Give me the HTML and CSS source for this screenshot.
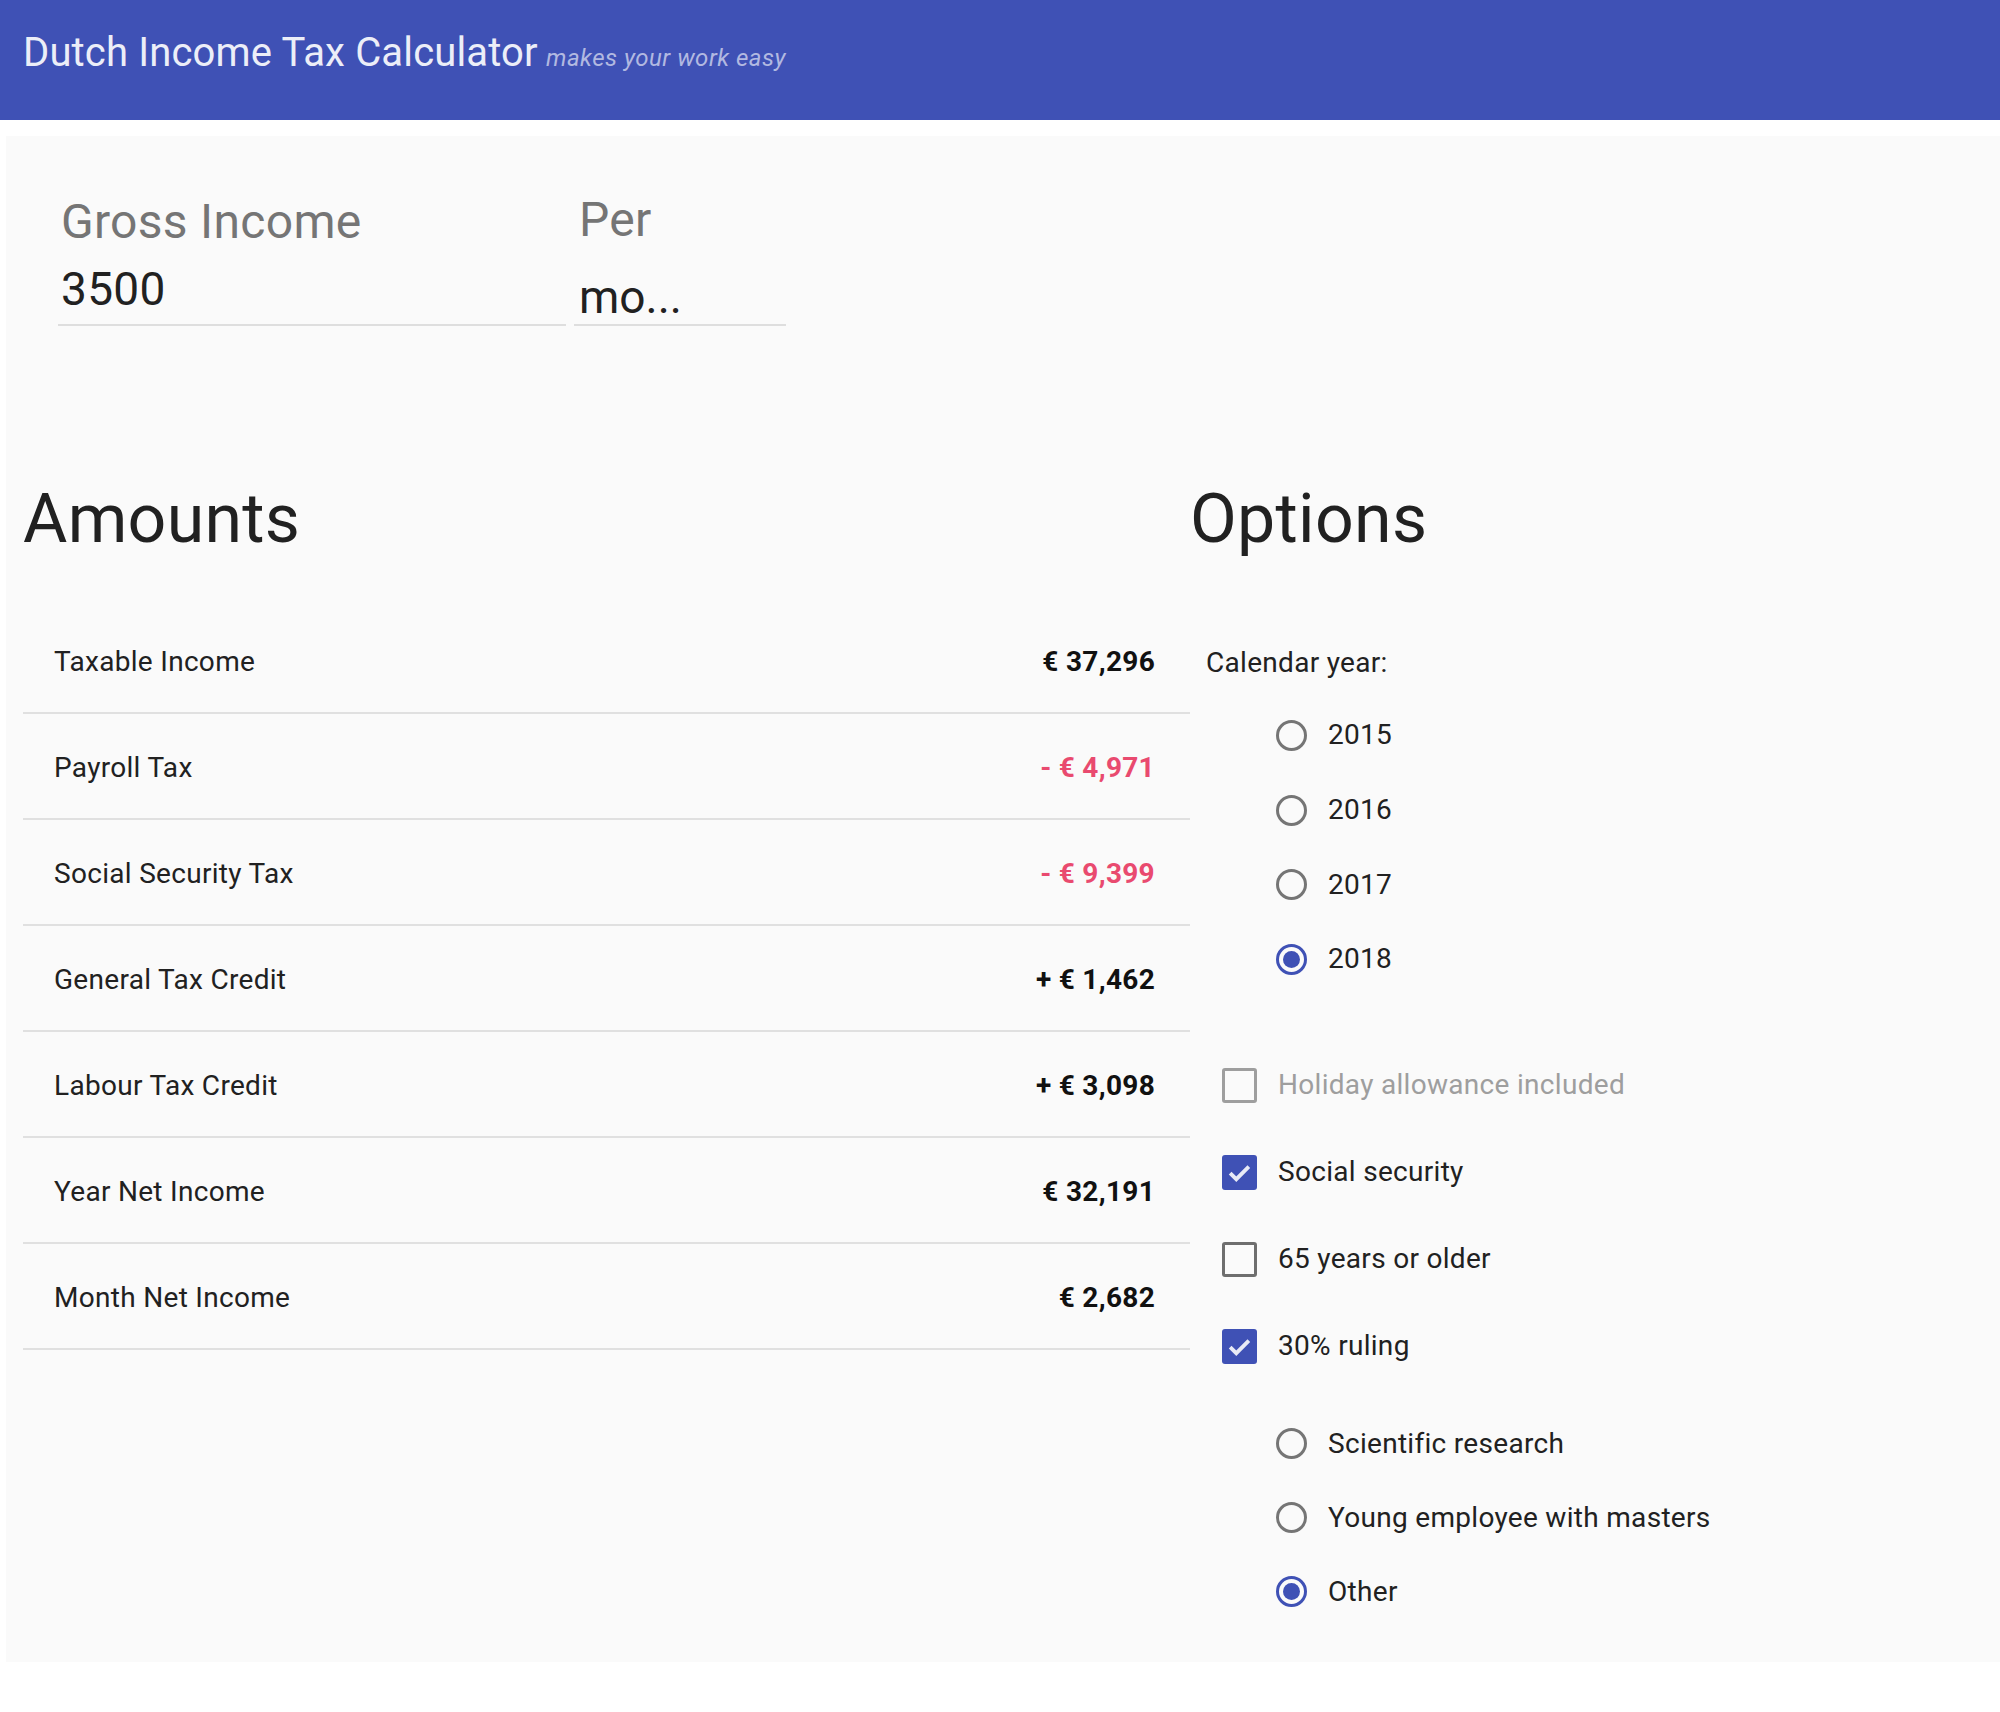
FILE: index.html
```html
<!DOCTYPE html>
<html lang="en">
<head>
<meta charset="utf-8">
<title>Dutch Income Tax Calculator</title>
<link rel="stylesheet" href="styles.css">
</head>
<body>
<header class="topbar">
  <span class="title">Dutch Income Tax Calculator</span>
  <span class="subtitle">makes your work easy</span>
</header>
<main class="panel">
  <section class="fields">
    <div class="field field-gross">
      <div class="field-label">Gross Income</div>
      <div class="field-value">3500</div>
    </div>
    <div class="field field-per">
      <div class="field-label">Per</div>
      <div class="field-value select-value">mo...</div>
    </div>
  </section>
  <section class="columns">
    <div class="amounts">
      <h2 class="heading">Amounts</h2>
      <div class="row"><span>Taxable Income</span><strong class="val">€ 37,296</strong></div>
      <div class="row"><span>Payroll Tax</span><strong class="val neg">- € 4,971</strong></div>
      <div class="row"><span>Social Security Tax</span><strong class="val neg">- € 9,399</strong></div>
      <div class="row"><span>General Tax Credit</span><strong class="val">+ € 1,462</strong></div>
      <div class="row"><span>Labour Tax Credit</span><strong class="val">+ € 3,098</strong></div>
      <div class="row"><span>Year Net Income</span><strong class="val">€ 32,191</strong></div>
      <div class="row"><span>Month Net Income</span><strong class="val">€ 2,682</strong></div>
    </div>
    <div class="options">
      <h2 class="heading heading-options">Options</h2>
      <div class="group-label">Calendar year:</div>
      <div class="radios years">
        <div class="radio-row"><span class="radio"></span><span class="opt-text">2015</span></div>
        <div class="radio-row"><span class="radio"></span><span class="opt-text">2016</span></div>
        <div class="radio-row"><span class="radio"></span><span class="opt-text">2017</span></div>
        <div class="radio-row"><span class="radio checked"></span><span class="opt-text">2018</span></div>
      </div>
      <div class="checks">
        <div class="check-row disabled"><span class="checkbox"></span><span class="opt-text">Holiday allowance included</span></div>
        <div class="check-row"><span class="checkbox checked"><svg viewBox="0 0 24 24" width="35" height="35"><path d="M5.6 12.4 L9.8 16.6 L18.4 8" fill="none" stroke="#e8eaf6" stroke-width="2.6"/></svg></span><span class="opt-text">Social security</span></div>
        <div class="check-row"><span class="checkbox"></span><span class="opt-text">65 years or older</span></div>
        <div class="check-row"><span class="checkbox checked"><svg viewBox="0 0 24 24" width="35" height="35"><path d="M5.6 12.4 L9.8 16.6 L18.4 8" fill="none" stroke="#e8eaf6" stroke-width="2.6"/></svg></span><span class="opt-text">30% ruling</span></div>
      </div>
      <div class="radios ruling">
        <div class="radio-row small"><span class="radio"></span><span class="opt-text">Scientific research</span></div>
        <div class="radio-row small"><span class="radio"></span><span class="opt-text">Young employee with masters</span></div>
        <div class="radio-row small"><span class="radio checked"></span><span class="opt-text">Other</span></div>
      </div>
    </div>
  </section>
</main>
</body>
</html>
```

FILE: styles.css
```css
* { box-sizing: border-box; }

body {
  margin: 0;
  background: #ffffff;
  font-family: Roboto, "Noto Sans", "Liberation Sans", sans-serif;
  color: #212121;
  letter-spacing: 0.3px;
}

.topbar {
  height: 120px;
  background: #3f51b5;
  padding: 29px 0 0 23px;
  white-space: nowrap;
}

.title {
  font-size: 40px;
  line-height: 48px;
  color: #eceef8;
  letter-spacing: 0.15px;
}

.subtitle {
  font-size: 24px;
  font-style: italic;
  color: #b2b9e1;
  margin-left: 4px;
  letter-spacing: 0.5px;
}

.panel {
  margin: 16px 0 0 6px;
  background: #fafafa;
  padding: 0 0 33px 17px;
}

.fields {
  display: flex;
  align-items: flex-end;
  gap: 8px;
  padding: 56px 0 0 35px;
}

.field {
  border-bottom: 2px solid #dedede;
  padding-left: 3px;
}

.field-gross { width: 508px; }
.field-per { width: 212px; padding-left: 5px; }

.field-label {
  font-size: 48px;
  line-height: 56px;
  color: #757575;
}

.field-value {
  font-size: 46px;
  line-height: 54px;
  color: #212121;
  padding: 12px 0 8px;
}

.select-value {
  padding: 22px 0 0;
  letter-spacing: 0;
}

.columns {
  display: grid;
  grid-template-columns: 1167px 1fr;
  margin-top: 153px;
}

.heading {
  margin: 0;
  font-size: 68px;
  line-height: 80px;
  font-weight: 400;
  color: #212121;
}

.amounts .heading { margin-bottom: 49px; }

.row {
  display: flex;
  justify-content: space-between;
  align-items: baseline;
  padding: 38px 35px 34px 31px;
  border-bottom: 2px solid #e0e0e0;
  font-size: 28px;
  line-height: 32px;
}

.val {
  font-weight: 700;
  color: #111111;
}

.val.neg { color: #e94a6f; }

.group-label {
  margin-top: 88px;
  padding-left: 16px;
  font-size: 28px;
  line-height: 32px;
}

.opt-text {
  font-size: 28px;
  line-height: 32px;
  margin-left: 21px;
}

.radios { padding-left: 86px; }
.years { margin-top: 19px; }
.ruling { margin-top: 17px; }

.radio-row {
  display: flex;
  align-items: center;
  height: 74.7px;
}

.radio-row.small { height: 74px; }

.radio {
  width: 31px;
  height: 31px;
  border: 3.5px solid #757575;
  border-radius: 50%;
  display: flex;
  align-items: center;
  justify-content: center;
  flex: none;
}

.radio.checked { border-color: #3f51b5; }

.radio.checked::after {
  content: "";
  width: 17px;
  height: 17px;
  border-radius: 50%;
  background: #3f51b5;
}

.checks {
  margin-top: 45px;
  padding-left: 32px;
}

.check-row {
  display: flex;
  align-items: center;
  height: 87px;
}

.checkbox {
  width: 35px;
  height: 35px;
  border: 3.5px solid #6e6e6e;
  border-radius: 3px;
  flex: none;
  display: flex;
}

.checkbox.checked {
  background: #3f51b5;
  border: none;
}

.check-row.disabled .checkbox { border-color: #9e9e9e; }
.check-row.disabled .opt-text { color: #9e9e9e; }
```
